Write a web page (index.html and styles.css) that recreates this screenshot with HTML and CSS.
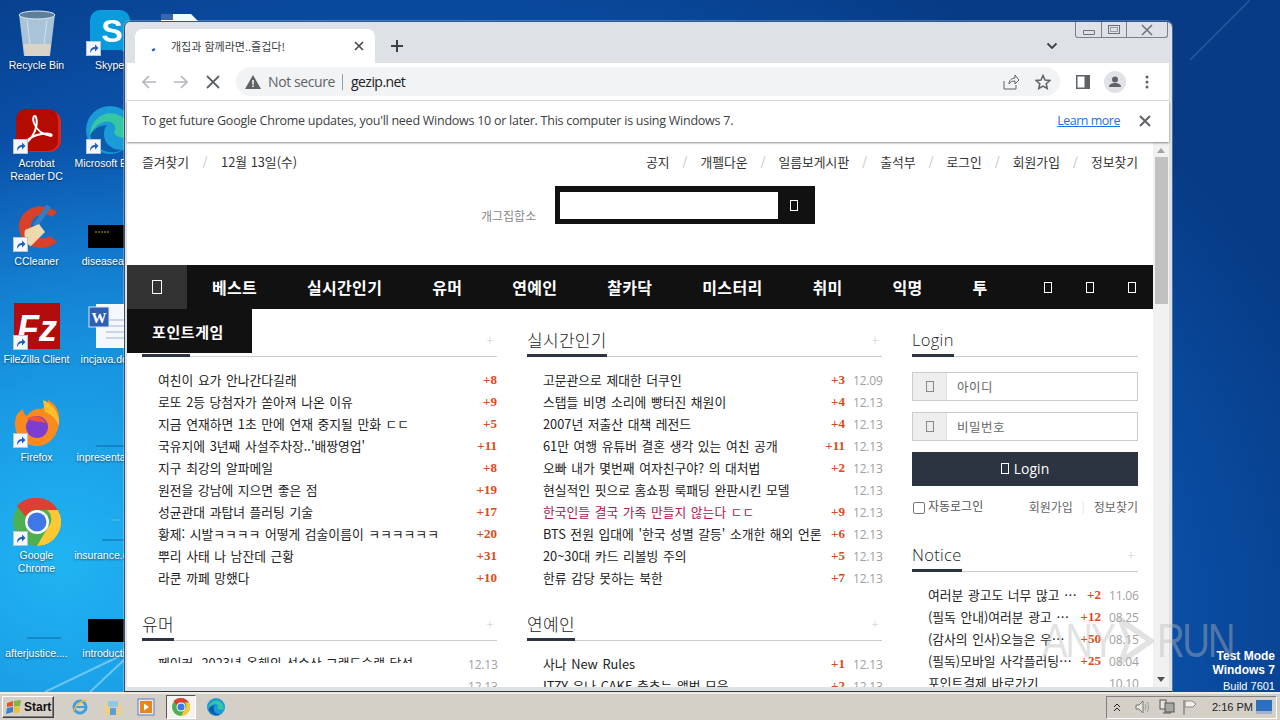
FILE: index.html
```html
<!DOCTYPE html>
<html lang="ko">
<head>
<meta charset="utf-8">
<title>개집과 함께라면..즐겁다!</title>
<link rel="stylesheet" href="styles.css">
</head>
<body>
<svg class="defs" width="0" height="0">
  <defs>
    <symbol id="sc" viewBox="0 0 15 15"><rect x=".5" y=".5" width="14" height="14" fill="#f4f7fb" stroke="#b8c4d4"/><path d="M4 12c0-4 2-6 5-6V3.5l3.5 3.5L9 10.500V8c-2 0-3.500 1.500-5 4z" fill="#1f5fc4"/></symbol>
    <symbol id="chrome" viewBox="0 0 48 48">
      <circle cx="24" cy="24" r="24" fill="#4caf50"/>
      <path d="M24 0a24 24 0 0 1 20.800 12H24a12 12 0 0 0-11 7L4 8A24 24 0 0 1 24 0z" fill="#dd3f33"/>
      <path d="M44.800 12A24 24 0 0 1 24 48l10.500-18A12 12 0 0 0 34 12z" fill="#fcc934"/>
      <circle cx="24" cy="24" r="12" fill="#fff"/><circle cx="24" cy="24" r="9.500" fill="#3f78e6"/>
    </symbol>
    <symbol id="edge" viewBox="0 0 48 48">
      <circle cx="24" cy="24" r="24" fill="#1a9ad6"/>
      <path d="M4 34C2 14 18 4 30 8c10 3 16 12 14 22-6 3-14 2-16-4 4-6-2-12-10-10C10 18 4 26 4 34z" fill="#37c6a4"/>
      <path d="M4 30c6 14 20 20 32 14-10 0-18-6-18-16 0-4 1-7 3-9C12 20 6 24 4 30z" fill="#0b5cad"/>
    </symbol>
  </defs>
</svg>

<div class="desktop">
  <svg class="streaks" viewBox="0 0 1280 692" width="1280" height="692">
    <path d="M45 692L122 655M90 692L124 660" stroke="#a4ddf7" stroke-width="2" fill="none" opacity=".6"/>
    <path d="M1190 60L1250 0" stroke="#8ed4f5" stroke-width="1.500" fill="none" opacity=".2"/>
  </svg>

  <div class="icons">
    <div class="dicon">
      <svg class="ico" viewBox="0 0 48 48"><path d="M6 6h36l-5 42H11z" fill="#a9c3d8"/><path d="M10 36h28l-2 12H12z" fill="#d9d4c6"/><ellipse cx="24" cy="7" rx="18" ry="4" fill="#5d7e9c" stroke="#dce8f1"/><path d="M14 12l3 24M34 12l-3 24" stroke="#e4eef6" opacity=".7"/></svg>
      <span class="dlabel">Recycle Bin</span>
    </div>
    <div class="dicon">
      <span class="ico"><svg class="full" viewBox="0 0 48 48"><rect x="6" y="4" width="42" height="42" rx="12" fill="#e2231a"/><rect x="3" y="3" width="42" height="42" rx="10" fill="#b30b00"/><path d="M12 38c8-6 14-18 11-27-2-3-4 1-2 6 3 8 10 12 17 13 3-2-4-4-14-1-6 2-12 6-12 9z" fill="none" stroke="#fff" stroke-width="2"/></svg><svg class="sc"><use href="#sc"/></svg></span>
      <span class="dlabel">Acrobat<br>Reader DC</span>
    </div>
    <div class="dicon">
      <span class="ico"><svg class="full" viewBox="0 0 48 48"><path d="M44 8C30-4 8 4 6 20c-2 20 22 32 38 18l-7-6c-8 6-20 0-19-11 1-10 14-14 21-8z" fill="#d8402a"/><path d="M36 2L22 22" stroke="#2f7fc4" stroke-width="5"/><path d="M12 26l14-6 6 8-14 14c-4 0-8-10-6-16z" fill="#eed8ae"/></svg><svg class="sc"><use href="#sc"/></svg></span>
      <span class="dlabel">CCleaner</span>
    </div>
    <div class="dicon">
      <span class="ico"><svg class="full" viewBox="0 0 48 48"><rect x="1" y="1" width="46" height="46" fill="#b30c0c"/><text x="24" y="39" class="fz">Fz</text></svg><svg class="sc"><use href="#sc"/></svg></span>
      <span class="dlabel">FileZilla Client</span>
    </div>
    <div class="dicon">
      <span class="ico"><svg class="full" viewBox="0 0 48 48"><path d="M2 24c0-8 3-12 8-15 0 4 2 6 4 7 4-6 10-8 14-7 5-2 7-6 7-9 8 4 12 12 11 22-1 14-10 24-22 24S2 36 2 24z" fill="#fb8a1e"/><path d="M30 0c10 4 17 13 16 26-3-8-8-12-14-14z" fill="#fcc02c"/><circle cx="24" cy="27" r="11" fill="#7a3fd0"/><path d="M14 19c6-5 16-3 19 4-6-2-12-1-19-4z" fill="#f2503a"/></svg><svg class="sc"><use href="#sc"/></svg></span>
      <span class="dlabel">Firefox</span>
    </div>
    <div class="dicon">
      <span class="ico"><svg class="full"><use href="#chrome"/></svg><svg class="sc"><use href="#sc"/></svg></span>
      <span class="dlabel">Google<br>Chrome</span>
    </div>
    <div class="dicon">
      <svg class="ico" viewBox="0 0 48 48"><path d="M14 42h44" stroke="#0c6aa8" stroke-width="1"/></svg>
      <span class="dlabel">afterjustice....</span>
    </div>

    <div class="dicon">
      <span class="ico"><svg class="full" viewBox="0 0 48 48"><rect x="4" y="2" width="40" height="40" rx="10" fill="#0a9bdc"/><circle cx="42" cy="36" r="9" fill="#0a9bdc"/><text x="26" y="34" class="skype">S</text></svg><svg class="sc"><use href="#sc"/></svg></span>
      <span class="dlabel">Skype</span>
    </div>
    <div class="dicon">
      <span class="ico"><svg class="full"><use href="#edge"/></svg><svg class="sc"><use href="#sc"/></svg></span>
      <span class="dlabel">Microsoft Edge</span>
    </div>
    <div class="dicon">
      <svg class="ico" viewBox="0 0 48 48"><rect x="2" y="21" width="46" height="23" fill="#000"/><path d="M9 28h14" stroke="#c9a11a" stroke-dasharray="2 1"/></svg>
      <span class="dlabel">diseaseasia</span>
    </div>
    <div class="dicon">
      <svg class="ico" viewBox="0 0 48 48"><path d="M10 2h38v44H10z" fill="#f4f7fb"/><path d="M20 18h26M20 24h26M20 30h26M20 36h26" stroke="#9fb4d0"/><rect x="3" y="5" width="20" height="20" fill="#2d5fb2" stroke="#dbe6f5"/><text x="13" y="21" class="wordw">W</text></svg>
      <span class="dlabel">incjava.docx</span>
    </div>
    <div class="dicon">
      <svg class="ico" viewBox="0 0 48 48"><path d="M10 46h38" stroke="#0c6aa8" stroke-width="1"/></svg>
      <span class="dlabel">inpresentation</span>
    </div>
    <div class="dicon">
      <svg class="ico" viewBox="0 0 48 48"><path d="M25 22h8" stroke="#6fb4d8"/><path d="M16 42h34" stroke="#0c6aa8"/></svg>
      <span class="dlabel">insurance.docx</span>
    </div>
    <div class="dicon">
      <svg class="ico" viewBox="0 0 48 48"><rect x="2" y="23" width="46" height="23" fill="#000"/></svg>
      <span class="dlabel">introduction</span>
    </div>

    <div class="dicon">
      <svg class="ico" viewBox="0 0 48 48"><path d="M2 6h30l8 8v34H2z" fill="#f4f7fb"/><rect x="2" y="6" width="12" height="6" fill="#3a66a8"/></svg>
    </div>
  </div>

  <div class="wintext">
    <b>Test Mode</b>
    <b>Windows 7</b>
    <span>Build 7601</span>
  </div>

  <div class="browser">
    <div class="winctl">
      <span class="ctl ctl-min"><i class="min-g"></i></span>
      <span class="ctl ctl-max"><i class="max-g"></i></span>
      <span class="ctl ctl-close">
        <svg width="14" height="12" viewBox="0 0 14 12"><path d="M2 1l10 10M12 1L2 11" stroke="#6d7076" stroke-width="1.500" fill="none"/></svg>
      </span>
    </div>

    <div class="tabstrip">
      <div class="tab">
        <svg class="spin" width="16" height="16" viewBox="0 0 16 16"><path d="M5 12.500l3-1.500" stroke="#1a5fc0" stroke-width="2" fill="none"/></svg>
        <span class="tabtitle">개집과 함께라면..즐겁다!</span>
        <svg class="tabx" width="10" height="10" viewBox="0 0 10 10"><path d="M1 1l8 8M9 1l-8 8" stroke="#45474b" stroke-width="1.600"/></svg>
      </div>
      <svg class="newtab" width="14" height="14" viewBox="0 0 14 14"><path d="M7 1v12M1 7h12" stroke="#3c4043" stroke-width="2"/></svg>
      <svg class="chev" width="12" height="8" viewBox="0 0 12 8"><path d="M1.500 1.500L6 6l4.500-4.500" stroke="#3c4043" stroke-width="1.800" fill="none"/></svg>
    </div>

    <div class="toolbar">
      <svg class="tb" width="18" height="18" viewBox="0 0 18 18"><path d="M16 9H3M9 3L3 9l6 6" stroke="#b4b7bb" stroke-width="1.700" fill="none"/></svg>
      <svg class="tb" width="18" height="18" viewBox="0 0 18 18"><path d="M2 9h13M9 3l6 6-6 6" stroke="#b4b7bb" stroke-width="1.700" fill="none"/></svg>
      <svg class="tb" width="18" height="18" viewBox="0 0 18 18"><path d="M3 3l12 12M15 3L3 15" stroke="#5f6368" stroke-width="1.800" fill="none"/></svg>
      <div class="omni">
        <svg width="16" height="14" viewBox="0 0 16 14"><path d="M8 0l8 14H0z" fill="#5f6368"/><path d="M8 5v4.500M8 10.500v1.500" stroke="#fff" stroke-width="1.500"/></svg>
        <span class="notsec">Not secure</span>
        <span class="omnisep"></span>
        <span class="url">gezip.net</span>
        <span class="omnispace"></span>
        <svg width="16" height="16" viewBox="0 0 16 16"><path d="M1 7v8h12v-4M6 10c0-4 3-6 6-6V1l4 5-4 4V7c-3 0-5 1-6 3z" stroke="#5f6368" fill="none"/></svg>
        <svg class="star" width="16" height="16" viewBox="0 0 16 16"><path d="M8 1.500l2 4.500 4.800.5-3.600 3.200 1 4.800L8 12.100l-4.200 2.400 1-4.800L1.200 6.500 6 6z" stroke="#5f6368" stroke-width="1.500" fill="none"/></svg>
      </div>
      <svg class="tbpanel" width="14" height="14" viewBox="0 0 14 14"><rect width="14" height="14" fill="#5f6368"/><rect x="1.500" y="1.500" width="7" height="11" fill="#fff"/></svg>
      <svg class="tbprofile" width="22" height="22" viewBox="0 0 22 22"><circle cx="11" cy="11" r="11" fill="#e0e2e6"/><circle cx="11" cy="8.500" r="3" fill="#5f6368"/><path d="M5 16c0-3 3-4 6-4s6 1 6 4z" fill="#5f6368"/></svg>
      <svg class="tbmenu" width="4" height="14" viewBox="0 0 4 14"><circle cx="2" cy="2" r="1.500" fill="#5f6368"/><circle cx="2" cy="7" r="1.500" fill="#5f6368"/><circle cx="2" cy="12" r="1.500" fill="#5f6368"/></svg>
    </div>

    <div class="infobar">
      <span class="infotext">To get future Google Chrome updates, you'll need Windows 10 or later. This computer is using Windows 7.</span>
      <a class="learn">Learn more</a>
      <svg class="infox" width="12" height="12" viewBox="0 0 12 12"><path d="M1 1l10 10M11 1L1 11" stroke="#5f6368" stroke-width="2"/></svg>
    </div>

    <div class="viewport">
      <div class="page">
        <div class="toprow">
          <div class="topl"><span>즐겨찾기</span><i>/</i><span>12월 13일(수)</span></div>
          <div class="topr"><span>공지</span><i>/</i><span>개펠다운</span><i>/</i><span>일름보게시판</span><i>/</i><span>출석부</span><i>/</i><span>로그인</span><i>/</i><span>회원가입</span><i>/</i><span>정보찾기</span></div>
        </div>
        <div class="searchrow">
          <span class="brand">개그집합소</span>
          <div class="searchbox"><span class="searchfield"></span><span class="searchbtn"><i class="tofu tofu-w"></i></span></div>
        </div>
        <nav class="nav">
          <span class="home"><i class="tofu tofu-w tofu-l"></i></span>
          <a>베스트</a><a>실시간인기</a><a>유머</a><a>연예인</a><a>찰카닥</a><a>미스터리</a><a>취미</a><a>익명</a><a>투</a>
          <span class="navicons"><i class="tofu tofu-w"></i><i class="tofu tofu-w"></i><i class="tofu tofu-w"></i></span>
        </nav>
        <main class="main">
          <div class="pointtab">포인트게임</div>
          <div class="col">
            <section class="sec">
              <header class="head"><h2 class="htitle">베스트</h2><span class="plus">+</span></header>
              <ul class="list">
                <li class="row"><span class="t">여친이 요가 안나간다길래</span><b class="c">+8</b></li>
                <li class="row"><span class="t">로또 2등 당첨자가 쏟아져 나온 이유</span><b class="c">+9</b></li>
                <li class="row"><span class="t">지금 연재하면 1초 만에 연재 중지될 만화 ㄷㄷ</span><b class="c">+5</b></li>
                <li class="row"><span class="t">국유지에 3년째 사설주차장..'배짱영업'</span><b class="c">+11</b></li>
                <li class="row"><span class="t">지구 최강의 알파메일</span><b class="c">+8</b></li>
                <li class="row"><span class="t">원전을 강남에 지으면 좋은 점</span><b class="c">+19</b></li>
                <li class="row"><span class="t">성균관대 과탑녀 플러팅 기술</span><b class="c">+17</b></li>
                <li class="row"><span class="t">황제: 시발ㅋㅋㅋㅋ 어떻게 검술이름이 ㅋㅋㅋㅋㅋㅋ</span><b class="c">+20</b></li>
                <li class="row"><span class="t">뿌리 사태 나 남잔데 근황</span><b class="c">+31</b></li>
                <li class="row"><span class="t">라쿤 까페 망했다</span><b class="c">+10</b></li>
              </ul>
            </section>
            <section class="sec">
              <header class="head"><h2 class="htitle">유머</h2><span class="plus">+</span></header>
              <ul class="list">
                <li class="row"><span class="t cut">페이커, 2023년 올해의 선수상 그랜드슬램 달성</span><span class="d">12.13</span></li>
                <li class="row"><span class="t"></span><span class="d">12.13</span></li>
              </ul>
            </section>
          </div>
          <div class="col">
            <section class="sec">
              <header class="head"><h2 class="htitle">실시간인기</h2><span class="plus">+</span></header>
              <ul class="list">
                <li class="row"><span class="t">고문관으로 제대한 더쿠인</span><b class="c">+3</b><span class="d">12.09</span></li>
                <li class="row"><span class="t">스탭들 비명 소리에 빵터진 채원이</span><b class="c">+4</b><span class="d">12.13</span></li>
                <li class="row"><span class="t">2007년 저출산 대책 레전드</span><b class="c">+4</b><span class="d">12.13</span></li>
                <li class="row"><span class="t">61만 여행 유튜버 결혼 생각 있는 여친 공개</span><b class="c">+11</b><span class="d">12.13</span></li>
                <li class="row"><span class="t">오빠 내가 몇번째 여자친구야? 의 대처법</span><b class="c">+2</b><span class="d">12.13</span></li>
                <li class="row"><span class="t">현실적인 핏으로 홈쇼핑 룩패딩 완판시킨 모델</span><span class="d">12.13</span></li>
                <li class="row"><span class="t hot">한국인들 결국 가족 만들지 않는다 ㄷㄷ</span><b class="c">+9</b><span class="d">12.13</span></li>
                <li class="row"><span class="t">BTS 전원 입대에 '한국 성별 갈등' 소개한 해외 언론</span><b class="c">+6</b><span class="d">12.13</span></li>
                <li class="row"><span class="t">20~30대 카드 리볼빙 주의</span><b class="c">+5</b><span class="d">12.13</span></li>
                <li class="row"><span class="t">한류 감당 못하는 북한</span><b class="c">+7</b><span class="d">12.13</span></li>
              </ul>
            </section>
            <section class="sec">
              <header class="head"><h2 class="htitle">연예인</h2><span class="plus">+</span></header>
              <ul class="list">
                <li class="row"><span class="t">사나 New Rules</span><b class="c">+1</b><span class="d">12.13</span></li>
                <li class="row"><span class="t">ITZY 유나 CAKE 춤추는 앨범 모음</span><b class="c">+2</b><span class="d">12.13</span></li>
              </ul>
            </section>
          </div>
          <aside class="side">
            <header class="head"><h2 class="htitle htitle-en">Login</h2></header>
            <form class="login">
              <div class="field"><span class="fico"><i class="tofu tofu-g"></i></span><span class="fph">아이디</span></div>
              <div class="field"><span class="fico"><i class="tofu tofu-g"></i></span><span class="fph">비밀번호</span></div>
              <div class="btn"><i class="tofu tofu-w"></i> Login</div>
              <div class="loginopts">
                <span class="cb"></span><span class="auto">자동로그인</span>
                <span class="links"><span>회원가입</span><i>|</i><span>정보찾기</span></span>
              </div>
            </form>
            <section class="notice">
              <header class="head"><h2 class="htitle htitle-en">Notice</h2><span class="plus">+</span></header>
              <ul class="list">
                <li class="row"><span class="t">여러분 광고도 너무 많고 귀찮으시죠 안내드립니다</span><b class="c">+2</b><span class="d">11.06</span></li>
                <li class="row"><span class="t">(필독 안내)여러분 광고 차단 기능을 꺼주세요</span><b class="c">+12</b><span class="d">08.25</span></li>
                <li class="row"><span class="t">(감사의 인사)오늘은 우리 개집의 생일입니다</span><b class="c">+50</b><span class="d">08.15</span></li>
                <li class="row"><span class="t">(필독)모바일 사각플러팅 광고 안내드립니다</span><b class="c">+25</b><span class="d">08.04</span></li>
                <li class="row"><span class="t">포인트결제 바로가기</span><span class="d">10.10</span></li>
              </ul>
            </section>
          </aside>
        </main>
      </div>
      <div class="scrollbar">
        <span class="arrow-up"></span>
        <span class="thumb"></span>
        <span class="arrow-down"></span>
      </div>
    </div>
  </div>

  <div class="watermark"><span>ANY</span><svg width="46" height="50" viewBox="0 0 46 50"><path d="M4 4l38 21L4 46l10-21z" fill="none" stroke="currentColor" stroke-width="6"/></svg><span>RUN</span></div>
</div>

<footer class="taskbar">
  <div class="start">
    <svg width="16" height="14" viewBox="0 0 16 14"><path d="M1 3l6-2v5l-6 1z" fill="#e2552a"/><path d="M8 1l7-1-1 6-6 .5z" fill="#7cb83a"/><path d="M1 8l6-1v5l-7 2z" fill="#3a7fd0"/><path d="M8 7l6-.5-1 6-5 1z" fill="#f0c030"/></svg>
    <b>Start</b>
  </div>
  <div class="quick">
    <svg width="18" height="18" viewBox="0 0 18 18"><circle cx="9" cy="9" r="6" fill="none" stroke="#3fa0e0" stroke-width="3"/><path d="M4 9h10" stroke="#3fa0e0" stroke-width="2"/><path d="M2 14c2-6 8-12 14-12" stroke="#eec03a" stroke-width="1.500" fill="none"/></svg>
    <svg width="18" height="16" viewBox="0 0 18 16"><path d="M1 4h16v12H1z" fill="#f0d080"/><path d="M4 2h10v6H4z" fill="#8fc8e8"/><rect x="6" y="9" width="6" height="7" fill="#5aa0d0"/></svg>
    <svg width="18" height="18" viewBox="0 0 18 18"><rect x="1" y="1" width="16" height="16" fill="#e8e8f0" stroke="#5b7fc0"/><rect x="3" y="3" width="12" height="12" fill="#e8861e"/><path d="M7 5.500l5 3.500-5 3.500z" fill="#fff"/></svg>
    <span class="activeapp"><svg width="18" height="18"><use href="#chrome"/></svg></span>
    <svg width="18" height="18"><use href="#edge"/></svg>
  </div>
  <div class="tray">
    <svg width="8" height="9" viewBox="0 0 8 9"><path d="M1 4l3-3 3 3M1 8l3-3 3 3" stroke="#222" fill="none"/></svg>
    <svg class="t-sp" width="16" height="16" viewBox="0 0 16 16"><path d="M2 6h3l4-4v12l-4-4H2z" fill="#e6e4de" stroke="#777"/><path d="M11 5c1 2 1 4 0 6M13 3c2 3 2 7 0 10" stroke="#999" fill="none"/></svg>
    <svg class="t-net" width="16" height="16" viewBox="0 0 16 16"><rect x="1" y="1" width="6" height="9" fill="#e6e4de" stroke="#555"/><rect x="6" y="4" width="9" height="9" fill="#a8a8a0" stroke="#555"/><path d="M4 14h8" stroke="#555"/></svg>
    <svg class="t-flag" width="16" height="16" viewBox="0 0 16 16"><path d="M2 1v15" stroke="#666"/><path d="M3 2h7l4 3-3 3H3z" fill="#f2f0ea" stroke="#888"/></svg>
    <span class="clock">2:16 PM</span>
    <svg class="t-mon" width="16" height="14" viewBox="0 0 16 14"><rect width="16" height="14" fill="#2d6fc0"/><rect y="11" width="16" height="3" fill="#9fb4c8"/></svg>
  </div>
</footer>
</body>
</html>
```
FILE: styles.css
```css
* { box-sizing: border-box; }
html, body { margin: 0; width: 1280px; height: 720px; overflow: hidden; }
body { font-family: "Noto Sans CJK KR", "Noto Sans", sans-serif; background: #d4d0c8; position: relative; }
i { font-style: normal; }
ul { list-style: none; margin: 0; padding: 0; }
h2 { margin: 0; font: inherit; }
.defs { position: absolute; }

.desktop {
  position: relative; width: 1280px; height: 692px; overflow: hidden;
  background:
    radial-gradient(ellipse 420px 420px at 60px 560px, #20b4f2 0, rgba(32,180,242,0) 100%),
    radial-gradient(ellipse 1000px 760px at 400px 640px, #1288de 0, #0f6fcb 50%, #0a50a8 75%, #073b85 100%);
}
.streaks { position: absolute; left: 0; top: 0; }
.icons { display: grid; grid-template-columns: repeat(3, 73px); grid-template-rows: repeat(7, 98px); grid-auto-flow: column; position: relative; }
.dicon { display: flex; flex-direction: column; align-items: center; padding-top: 8px; min-width: 0; }
.ico { width: 48px; height: 48px; display: block; position: relative; flex: none; }
.full { width: 48px; height: 48px; display: block; }
.sc { position: absolute; left: 0; bottom: 0; width: 15px; height: 15px; }
.dlabel { margin-top: 3px; font: 10.500px/13px "Liberation Sans", sans-serif; color: #fff; text-align: center; white-space: nowrap; text-shadow: 0 1px 2px rgba(0,0,0,.6); }
.fz { font: italic bold 36px "Liberation Sans", sans-serif; fill: #fff; text-anchor: middle; }
.skype { font: bold 32px "Liberation Sans", sans-serif; fill: #fff; text-anchor: middle; }
.wordw { font: bold 15px "Liberation Serif", serif; fill: #fff; text-anchor: middle; }

.wintext { position: absolute; right: 5px; bottom: -1px; display: flex; flex-direction: column; align-items: flex-end; font: 11px/14.500px "Liberation Sans", sans-serif; color: #fff; }
.wintext b { font-size: 12px; }
.wintext span { margin-top: 1px; }

.watermark { position: absolute; left: 1042px; top: 616px; display: flex; align-items: center; gap: 4px; color: rgba(185,185,185,.42); font: 48px/48px "Liberation Sans", sans-serif; letter-spacing: -3px; pointer-events: none; transform: scaleX(.8); transform-origin: left; }

.browser {
  position: absolute; left: 124px; top: 21px; width: 1048px; height: 671px;
  background: #dee1e6; border-left: 1px solid #3d4f63; border-top: 1px solid #2d5a8a; border-radius: 6px 6px 0 0;
  padding: 0 3px 4px 2px; display: flex; flex-direction: column;
  border-bottom: 1px solid #333; box-shadow: 0 0 0 1px rgba(255,255,255,.25);
}
.winctl { position: absolute; right: 4px; top: 0; display: flex; height: 16px; border: 1px solid #7d8087; border-top: 0; border-radius: 0 0 3px 3px; }
.ctl { display: flex; align-items: center; justify-content: center; height: 100%; border-left: 1px solid #7d8087; }
.ctl-min { width: 25px; border-left: 0; }
.ctl-max { width: 25px; }
.ctl-close { width: 41px; }
.min-g { width: 12px; height: 5px; border: 1px solid #6d7076; border-radius: 1px; margin-top: 5px; }
.max-g { width: 12px; height: 9px; border: 1px solid #6d7076; box-shadow: inset 0 0 0 1px #dee1e6, inset 0 0 0 2px #9a9da3; }

.tabstrip { height: 41px; flex: none; display: flex; align-items: flex-end; padding-left: 8px; position: relative; }
.tab { width: 240px; height: 34px; background: #fff; border-radius: 8px 8px 0 0; display: flex; align-items: center; padding: 0 11px 0 12px; }
.spin { flex: none; }
.tabtitle { margin-left: 8px; flex: 1; font-size: 11px; color: #3c4043; white-space: nowrap; }
.tabx { flex: none; }
.newtab { margin: 0 0 10px 15px; }
.chev { position: absolute; right: 111px; top: 20px; }

.toolbar { height: 38px; flex: none; background: #fff; border-bottom: 1px solid #dadce0; display: flex; align-items: center; padding-left: 13px; }
.tb { margin-right: 14px; flex: none; }
.omni { width: 824px; height: 29px; border-radius: 15px; background: #f1f3f4; display: flex; align-items: center; padding: 0 9px; }
.notsec { margin-left: 7px; font: 14px "Open Sans", sans-serif; letter-spacing: -.4px; color: #5f6368; }
.omnisep { width: 1px; height: 16px; background: #9aa0a6; margin: 0 8px 0 7px; }
.url { font: 14px "Open Sans", sans-serif; letter-spacing: -.55px; color: #202124; }
.omnispace { flex: 1; }
.star { margin-left: 16px; }
.tbpanel { margin-left: 16px; flex: none; }
.tbprofile { margin-left: 14px; flex: none; }
.tbmenu { margin-left: 19px; flex: none; }

.infobar { height: 41px; flex: none; background: #fff; display: flex; align-items: center; padding: 0 18px 2px 15px; box-shadow: 0 1px 2px rgba(0,0,0,.45); position: relative; z-index: 1; }
.infotext { flex: 1; font: 12.500px "Open Sans", sans-serif; letter-spacing: -.25px; color: #3c4043; white-space: nowrap; }
.learn { font: 12.500px "Open Sans", sans-serif; letter-spacing: -.5px; color: #1a73e8; text-decoration: underline; margin-right: 19px; }
.infox { flex: none; }

.viewport { flex: 1; min-height: 0; display: flex; overflow: hidden; background: #fff; }
.page { width: 1026px; flex: none; overflow: hidden; background: #fff; font-size: 13px; color: #222; }
.scrollbar { width: 17px; background: #f1f1f1; display: flex; flex-direction: column; align-items: center; position: relative; }
.arrow-up { margin-top: 6px; width: 0; height: 0; border: 4px solid transparent; border-top: 0; border-bottom: 5px solid #a3a3a3; }
.thumb { margin-top: 4px; width: 13px; height: 147px; background: #c1c1c1; }
.arrow-down { margin-top: auto; margin-bottom: 5px; width: 0; height: 0; border: 4px solid transparent; border-bottom: 0; border-top: 5px solid #505050; }

.toprow { height: 38px; margin-bottom: 2px; padding: 0 15px; display: flex; justify-content: space-between; align-items: center; font-size: 12.800px; color: #333; }
.topl, .topr { display: flex; align-items: center; white-space: nowrap; }
.topl i, .topr i { width: 31px; text-align: center; color: #bbb; font-size: 12px; }
.topl i { width: 32px; }
.searchrow { display: flex; align-items: flex-start; height: 38px; margin-top: 6px; padding-left: 354px; }
.brand { width: 74px; margin-top: 21px; font-size: 12px; color: #888; white-space: nowrap; }
.searchbox { width: 260px; height: 38px; background: #111; padding: 6px 0 5px 5px; display: flex; }
.searchfield { width: 218px; background: #fff; }
.searchbtn { flex: 1; display: flex; align-items: center; justify-content: center; padding-right: 6px; }

.tofu { display: inline-block; width: 8px; height: 11px; border: 1px solid currentColor; }
.tofu-w { color: #fff; }
.tofu-g { color: #888; }
.tofu-l { width: 10px; height: 14px; }

.nav { margin-top: 41px; height: 44px; background: #111; display: flex; align-items: center; color: #fff; font-size: 16px; font-weight: 700; letter-spacing: .3px; }
.nav .home { width: 60px; height: 44px; background: #333; display: flex; align-items: center; justify-content: center; }
.nav a { padding: 0 25px; white-space: nowrap; }
.navicons { margin-left: auto; display: flex; }
.navicons i { width: 8px; height: 11px; margin: 0 17px; }

.main { position: relative; padding: 15px 15px 0; display: grid; grid-template-columns: 355px 355px 226px; column-gap: 30px; align-items: start; }
.pointtab { position: absolute; left: 0; top: 0; width: 125px; height: 44px; background: #111; color: #fff; font-size: 15px; font-weight: 700; letter-spacing: .6px; display: flex; align-items: center; padding-left: 25px; }
.head { height: 33px; border-bottom: 1px solid #ccc; display: flex; justify-content: space-between; }
.htitle { font-size: 17px; line-height: 32px; height: 33px; border-bottom: 3px solid #2b3440; font-weight: 300; color: #222; letter-spacing: .3px; white-space: nowrap; margin-bottom: -1px; }
.htitle-en { font-family: "Open Sans", sans-serif; font-weight: 300; font-size: 16.500px; }
.plus { font: 300 14px/34px "Open Sans", sans-serif; color: #ccc; padding-right: 3px; }
.sec { margin-bottom: 19px; }
.list { padding-top: 12px; }
.row { height: 22px; display: flex; align-items: center; padding-left: 16px; font-size: 12.800px; color: #222; word-spacing: 1px; }
.t { flex: 1; min-width: 0; white-space: nowrap; overflow: hidden; text-overflow: ellipsis; margin-bottom: 2px; }
.hot { color: #b0164f; }
.cut { height: 9px; line-height: 18px; align-self: flex-start; margin-top: 1px; margin-bottom: 0; }
.c { flex: none; margin-left: 8px; font: bold 13px "Liberation Serif", serif; color: #dc4a16; word-spacing: 0; }
.d { flex: none; width: 29px; margin-left: 8px; font: 12px "Open Sans", sans-serif; letter-spacing: -.2px; color: #a0a0a0; text-align: right; }

.login { padding-top: 15px; }
.field { height: 29px; border: 1px solid #ccc; display: flex; align-items: center; margin-bottom: 11px; }
.fico { width: 34px; height: 100%; background: #eee; border-right: 1px solid #ddd; display: flex; align-items: center; justify-content: center; }
.fph { margin-left: 10px; font-size: 12.500px; color: #666; letter-spacing: .5px; }
.btn { height: 34px; padding-bottom: 2px; background: #2b3440; color: #fff; display: flex; align-items: center; justify-content: center; gap: 5px; font: 14px "Open Sans", sans-serif; }
.loginopts { display: flex; align-items: center; margin-top: 8px; height: 24px; font-size: 12px; color: #555; }
.cb { width: 12px; height: 12px; border: 1px solid #777; border-radius: 2px; margin: 4px 3px 0 1px; flex: none; }
.auto { margin-top: -1px; white-space: nowrap; }
.links { margin-left: auto; display: flex; align-items: center; white-space: nowrap; color: #666; }
.links i { margin: 0 9px; color: #ddd; font-size: 11px; }
.notice { margin-top: 21px; }

.taskbar { position: absolute; left: 0; top: 692px; width: 1280px; height: 28px; background: #d4d0c8; border-top: 2px solid #eeebe4; display: flex; align-items: center; padding: 0 3px 0 2px; }
.start { width: 52px; height: 22px; display: flex; align-items: center; gap: 2px; padding-left: 3px; border: 1px solid; border-color: #fff #404040 #404040 #fff; box-shadow: inset -1px -1px 0 #808080; font: bold 12px "Liberation Sans", sans-serif; color: #111; }
.quick { display: flex; align-items: center; gap: 15px; margin-left: 17px; }
.activeapp { width: 30px; height: 24px; display: flex; align-items: center; justify-content: center; background: #f4f3ef; border: 1px solid; border-color: #555 #fff #fff #555; margin: 0 -4px; }
.tray { margin-left: auto; width: 171px; height: 23px; display: flex; align-items: center; padding: 0 4px 0 6px; border: 1px solid; border-color: #808080 #fff #fff #808080; }
.t-sp { margin-left: 13px; }
.t-net { margin-left: 9px; }
.t-flag { margin-left: 7px; }
.clock { font: 11px "Liberation Sans", sans-serif; color: #222; margin-left: 14px; white-space: nowrap; }
.t-mon { margin-left: auto; }
```
